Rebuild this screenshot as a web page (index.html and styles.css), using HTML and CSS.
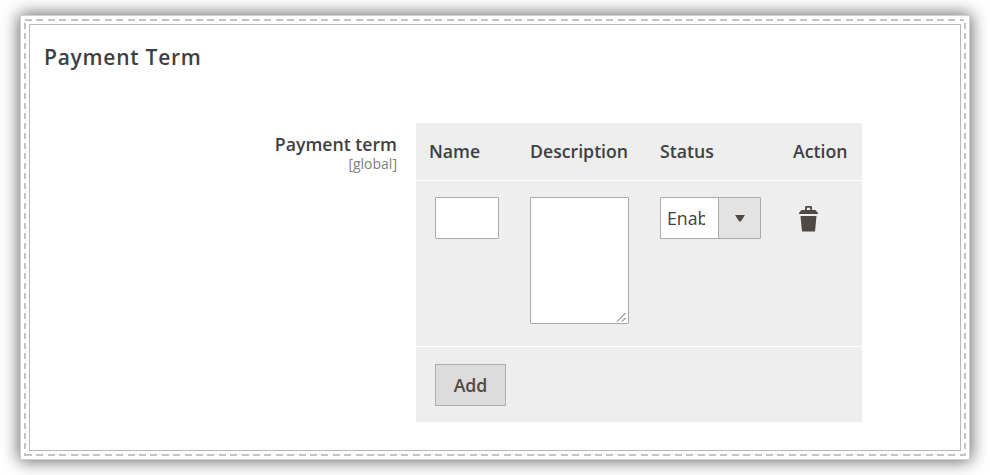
FILE: index.html
```
<!DOCTYPE html>
<html lang="en">
<head>
<meta charset="utf-8">
<title>Payment Term</title>
<link rel="stylesheet" href="styles.css">
</head>
<body>
<main class="frame">
  <section class="panel">
    <h1 class="title">Payment Term</h1>
    <div class="field">
      <div class="field-label">
        <div class="label">Payment term</div>
        <div class="scope">[global]</div>
      </div>
      <div class="grid">
        <div class="row head">
          <span>Name</span><span>Description</span><span>Status</span><span>Action</span>
        </div>
        <div class="row body">
          <div class="name-cell"><div class="input"></div></div>
          <div class="textarea">
            <svg class="grip" width="11" height="10" viewBox="0 0 11 10"><path d="M1 9.5 9.5 1M6 9.5 9.5 6"/></svg>
          </div>
          <div class="select">
            <div class="select-value"><span class="select-text">Enab</span></div>
            <div class="select-arrow"><svg width="10" height="7" viewBox="0 0 10 7"><path d="M0 0h10L5.8 6.4H4.2z"/></svg></div>
          </div>
          <svg class="trash" width="20" height="26" viewBox="0 0 20 26"><path fill-rule="evenodd" d="M6 4V1.2Q6 0 7.2 0h4.6Q13 0 13 1.2V4h3.5l2.5 3v1H0V7l2.5-3zM7.8 4h3.4V1.8H7.8zM1.5 10h16L16 25.5H3z"/></svg>
        </div>
        <div class="foot"><div class="button">Add</div></div>
      </div>
    </div>
  </section>
</main>
</body>
</html>
```

FILE: styles.css
```
* { box-sizing: border-box; }
body {
  margin: 0;
  height: 475px;
  padding: 15px 20px;
  overflow: hidden;
  background: #fff;
  color: #404040;
  font-family: "Open Sans", sans-serif;
}
.frame {
  width: 950px;
  height: 445px;
  padding: 8px;
  border: 1px solid #d0d0d0;
  background:
    repeating-linear-gradient(90deg, #c4c4c4 0 7px, transparent 7px 11.4px) 4px 3px / 939px 2px no-repeat,
    repeating-linear-gradient(90deg, #c4c4c4 0 7px, transparent 7px 11.4px) 4px 438px / 939px 2px no-repeat,
    repeating-linear-gradient(180deg, #c4c4c4 0 6px, transparent 6px 10px) 3px 7px / 2px 433px no-repeat,
    repeating-linear-gradient(180deg, #c4c4c4 0 6px, transparent 6px 10px) 943px 7px / 2px 433px no-repeat,
    #fff;
  box-shadow: 0 0 16px 1px rgba(0, 0, 0, .62);
}
.panel {
  width: 932px;
  height: 427px;
  border: 1px solid #b8b8b8;
  padding: 17px 14px;
}
.title {
  margin: 0;
  font-size: 21px;
  line-height: 30px;
  font-weight: 600;
  letter-spacing: .75px;
}
.field { display: flex; margin-top: 51px; }
.field-label { width: 353px; padding-top: 10px; text-align: right; }
.label { font-size: 17.7px; line-height: 22px; font-weight: 600; }
.scope { font-size: 14px; line-height: 17px; color: #808080; }
.grid { width: 446px; margin-left: 19px; background: #eee; }
.row { display: grid; grid-template-columns: 101px 130px 133px 1fr; padding-left: 13px; }
.head {
  height: 58px;
  border-bottom: 1px solid #fff;
  font-size: 17.7px;
  line-height: 57px;
  font-weight: 600;
}
.body { height: 166px; padding-top: 16px; border-bottom: 1px solid #fff; align-items: start; }
.name-cell { padding-left: 6px; }
.input, .textarea, .select { border: 1px solid #aaa; border-radius: 1px; background: #fff; }
.input { width: 64px; height: 42px; }
.textarea { display: flex; align-items: flex-end; justify-content: flex-end; width: 99px; height: 127px; padding: 1px; }
.grip { fill: none; stroke: #555; stroke-width: 1; }
.select { display: flex; width: 101px; height: 42px; }
.select-value { width: 57px; padding-left: 6px; font-size: 17.7px; line-height: 40px; }
.select-text { display: block; width: 38px; overflow: hidden; }
.select-arrow { flex: 1; display: flex; align-items: center; justify-content: center; border-left: 1px solid #aaa; background: #e3e3e3; }
.select-arrow svg, .trash { fill: #514943; }
.trash { margin: 9px 0 0 6px; }
.foot { height: 75px; padding: 17px 19px; }
.button {
  width: 71px;
  height: 42px;
  border: 1px solid #adadad;
  background: #dcdcdc;
  color: #514943;
  font-size: 17.7px;
  line-height: 40px;
  font-weight: 600;
  text-align: center;
}
```
